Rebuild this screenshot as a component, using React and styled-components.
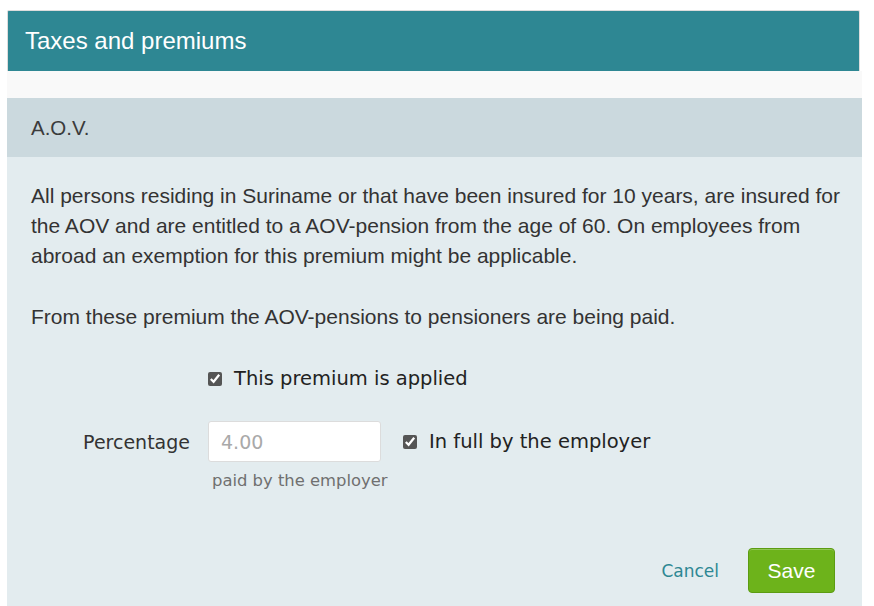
import React from 'react';
import styled, { createGlobalStyle } from 'styled-components';

const Global = createGlobalStyle`
    html, body {
        margin: 0;
        padding: 0;
        background: #ffffff;
    }
    body {
        font-family: "Liberation Sans", Arial, sans-serif;
    }
`;

const Page = styled.div`
    padding: 10px 12px 0 7px;
    height: 596px;
    overflow: hidden;
`;

const Modal = styled.div`
    width: 855px;
    display: flex;
    flex-direction: column;
`;

const Header = styled.div`
    background: #2e8793;
    border: 1px solid #dcdcdc;
    border-bottom: none;
    border-radius: 2px 2px 0 0;
    height: 61px;
    width: 853px;
    display: flex;
    align-items: center;
    padding-left: 17px;
    box-sizing: border-box;

    h1 {
        margin: 0;
        color: #ffffff;
        font-size: 24px;
        font-weight: normal;
    }
`;

const Spacer = styled.div`
    height: 27px;
    background: #f9f9f9;
`;

const SectionTitle = styled.div`
    height: 59px;
    background: #cbd9de;
    display: flex;
    align-items: center;
    padding-left: 24px;
    color: #3b3b3b;
    font-size: 20.5px;
`;

const Content = styled.div`
    background: #e3ecef;
    padding: 24px 18px 40px 24px;
    color: #333333;

    p {
        margin: 0 0 31px 0;
        font-size: 21px;
        line-height: 30px;
    }
`;

const Form = styled.div`
    display: grid;
    grid-template-columns: 159px auto;
    column-gap: 18px;
    align-items: center;
    font-family: "DejaVu Sans", Verdana, sans-serif;
    margin-top: 35px;
`;

const Label = styled.label`
    text-align: right;
    font-size: 19px;
    color: #333333;
    margin-top: ${p => p.$top || 0}px;
`;

const Field = styled.div`
    display: flex;
    align-items: center;
    gap: ${p => p.$gap || 0}px;
    margin-top: ${p => p.$top || 0}px;
`;

const Check = styled.label`
    display: flex;
    align-items: center;
    gap: 12px;
    font-size: 19.5px;
    color: #222222;

    input {
        width: 14px;
        height: 14px;
        margin: 0;
        accent-color: #555555;
    }
`;

const Input = styled.input`
    width: 173px;
    height: 41px;
    box-sizing: border-box;
    border: 1px solid #dcdcdc;
    border-radius: 3px;
    padding: 0 12px;
    font-family: "DejaVu Sans", Verdana, sans-serif;
    font-size: 19px;
    background: #ffffff;

    &::placeholder {
        color: #a9a9a9;
    }
`;

const Help = styled.div`
    grid-column: 2;
    font-size: 16.4px;
    color: #707070;
    padding-left: 4px;
    margin-top: 9px;
`;

const Actions = styled.div`
    display: flex;
    justify-content: flex-end;
    align-items: center;
    gap: 29px;
    margin-top: 58px;
    padding-right: 9px;
`;

const CancelLink = styled.a`
    font-family: "DejaVu Sans", Verdana, sans-serif;
    font-size: 17px;
    color: #2e8793;
    text-decoration: none;
`;

const SaveButton = styled.button`
    width: 87px;
    height: 45px;
    background: #6db31b;
    border: 1px solid #5c9c12;
    border-radius: 4px;
    box-shadow: inset 0 1px 0 rgba(255, 255, 255, 0.25);
    color: #ffffff;
    font-family: "Liberation Sans", Arial, sans-serif;
    font-size: 21px;
`;

const App = () => {
    return (
        <>
            <Global />
            <Page>
                <Modal>
                    <Header>
                        <h1>Taxes and premiums</h1>
                    </Header>
                    <Spacer />
                    <SectionTitle>A.O.V.</SectionTitle>
                    <Content>
                        <p>
                            All persons residing in Suriname or that have been insured for 10 years, are insured for
                            the AOV and are entitled to a AOV-pension from the age of 60. On employees from
                            abroad an exemption for this premium might be applicable.
                        </p>
                        <p>From these premium the AOV-pensions to pensioners are being paid.</p>

                        <Form>
                            <span />
                            <Check>
                                <input type="checkbox" defaultChecked />
                                This premium is applied
                            </Check>

                            <Label htmlFor="pct" $top={31}>Percentage</Label>
                            <Field $gap={22} $top={31}>
                                <Input id="pct" placeholder="4.00" />
                                <Check>
                                    <input type="checkbox" defaultChecked />
                                    In full by the employer
                                </Check>
                            </Field>
                            <Help>paid by the employer</Help>
                        </Form>

                        <Actions>
                            <CancelLink href="#">Cancel</CancelLink>
                            <SaveButton>Save</SaveButton>
                        </Actions>
                    </Content>
                </Modal>
            </Page>
        </>
    );
};

export default App;
